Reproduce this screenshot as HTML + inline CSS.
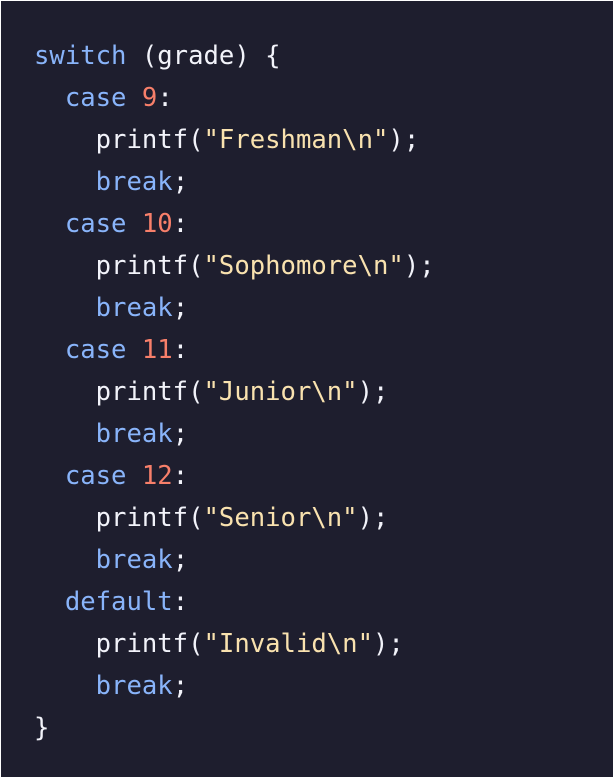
<!DOCTYPE html>
<html><head><style>
html,body{margin:0;padding:0;background:#fff;width:614px;height:778px;overflow:hidden}
.box{position:absolute;left:1px;top:1px;width:612px;height:776px;background:#1e1e2e}
pre{margin:0;position:absolute;left:33px;top:34px;font-family:"DejaVu Sans Mono","Liberation Mono",monospace;font-size:25.6px;line-height:42px;color:#f2f3fa}
.k{color:#89b4fa}.n{color:#f77f6a}.s{color:#f9e2af}
</style></head><body><div class="box"><pre><span class="k">switch</span> (grade) {
  <span class="k">case</span> <span class="n">9</span>:
    printf(<span class="s">"Freshman\n"</span>);
    <span class="k">break</span>;
  <span class="k">case</span> <span class="n">10</span>:
    printf(<span class="s">"Sophomore\n"</span>);
    <span class="k">break</span>;
  <span class="k">case</span> <span class="n">11</span>:
    printf(<span class="s">"Junior\n"</span>);
    <span class="k">break</span>;
  <span class="k">case</span> <span class="n">12</span>:
    printf(<span class="s">"Senior\n"</span>);
    <span class="k">break</span>;
  <span class="k">default</span>:
    printf(<span class="s">"Invalid\n"</span>);
    <span class="k">break</span>;
}</pre></div></body></html>
